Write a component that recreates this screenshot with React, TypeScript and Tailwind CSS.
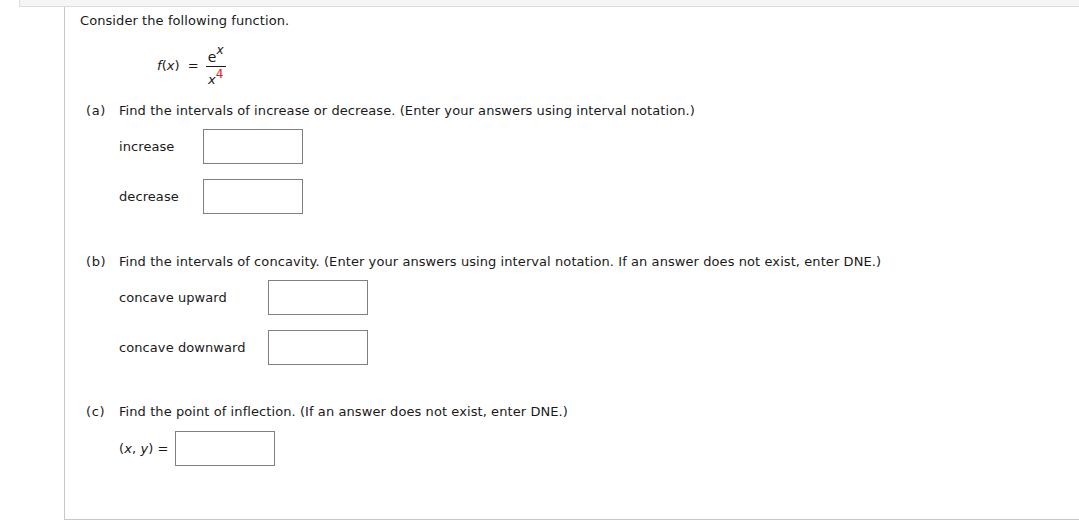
import React from "react";

const font = { fontFamily: '"DejaVu Sans", Verdana, sans-serif' };

function Box({ w = "w-[100px]" }: { w?: string }) {
  return <div className={`${w} h-[35px] shrink-0 border border-[#808080] bg-white`} />;
}

function Part({ tag, text }: { tag: string; text: string }) {
  return (
    <div className="flex h-4 items-center leading-4">
      <span className="w-[39px] shrink-0 pl-[6px] tracking-[0.6px]">{tag}</span>
      <span>{text}</span>
    </div>
  );
}

function Row({ label, labelW, mt }: { label: string; labelW: string; mt: string }) {
  return (
    <div className={`flex h-[35px] items-center pl-[39px] ${mt}`}>
      <span className={`${labelW} shrink-0`}>{label}</span>
      <Box />
    </div>
  );
}

export default function App() {
  return (
    <div className="min-h-[531px] bg-white text-[13px] tracking-[0.08px] text-[#1a1a1a]" style={font}>
      {/* top strip */}
      <div className="ml-[19px] h-[7px] border-b border-l border-[#dcdcdc] bg-[#f5f5f5]" />

      {/* question panel */}
      <div className="ml-[64px] border-b border-l border-[#c8c8c8] pb-[53px] pl-[15px] pt-[6px]">
        <div className="h-4 leading-4">Consider the following function.</div>

        {/* f(x) = e^x / x^4 */}
        <div className="ml-[77px] mt-[17px] flex h-[40px] items-center">
          <span>
            <i>f</i>(<i>x</i>)
          </span>
          <span className="ml-[8px]">=</span>
          <div className="ml-[7px] flex flex-col items-center">
            <div className="flex h-5 items-end px-[2px] pb-[1px] leading-4">
              <span className="text-[14px]">e</span>
              <i className="relative -top-[7px] text-[12px]">x</i>
            </div>
            <div className="h-px w-[20px] bg-[#1a1a1a]" />
            <div className="flex h-5 items-start pt-[2px] leading-4">
              <i className="relative top-[3px]">x</i>
              <span className="relative -top-[3px] text-[12px] text-[#e02020]">4</span>
            </div>
          </div>
        </div>

        {/* (a) */}
        <div className="mt-[17px]">
          <Part tag="(a)" text="Find the intervals of increase or decrease. (Enter your answers using interval notation.)" />
        </div>
        <Row label="increase" labelW="w-[84px]" mt="mt-[10px]" />
        <Row label="decrease" labelW="w-[84px]" mt="mt-[15px]" />

        {/* (b) */}
        <div className="mt-[40px]">
          <Part
            tag="(b)"
            text="Find the intervals of concavity. (Enter your answers using interval notation. If an answer does not exist, enter DNE.)"
          />
        </div>
        <Row label="concave upward" labelW="w-[149px]" mt="mt-[10px]" />
        <Row label="concave downward" labelW="w-[149px]" mt="mt-[15px]" />

        {/* (c) */}
        <div className="mt-[39px]">
          <Part tag="(c)" text="Find the point of inflection. (If an answer does not exist, enter DNE.)" />
        </div>
        <div className="mt-[11px] flex h-[35px] items-center pl-[39px]">
          <span className="w-[56px] shrink-0">
            (<i>x</i>, <i>y</i>) =
          </span>
          <Box />
        </div>
      </div>
    </div>
  );
}
